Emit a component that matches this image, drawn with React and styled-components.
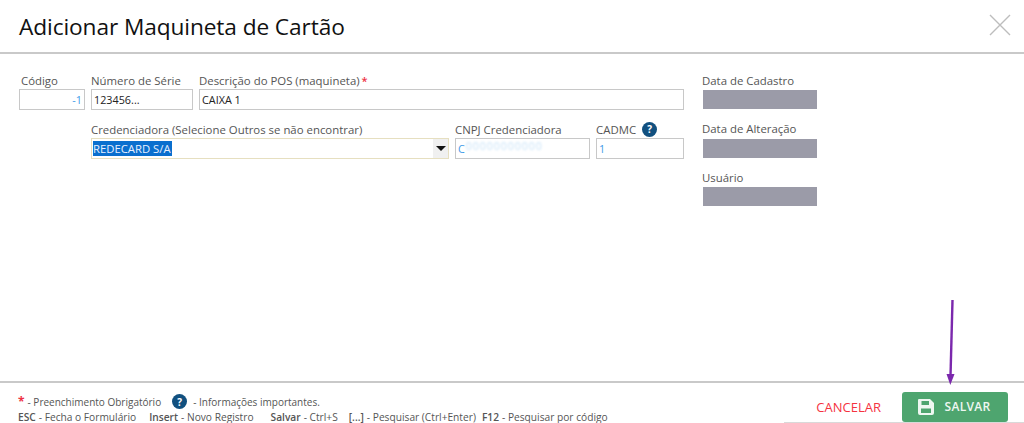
import React from 'react';
import styled, { createGlobalStyle } from 'styled-components';

const GlobalStyle = createGlobalStyle`
  html, body {
    margin: 0;
    padding: 0;
    background: #fff;
    font-family: "Open Sans", "Noto Sans", sans-serif;
  }
`;

const Page = styled.div`
  position: relative;
  width: 1024px;
  height: 423px;
  overflow: hidden;
  display: flex;
  flex-direction: column;
  background: #fff;
`;

const Header = styled.header`
  height: 52px;
  flex: none;
  display: flex;
  align-items: center;
  justify-content: space-between;
  padding: 0 13px 0 19px;
  border-bottom: 2px solid #c9c9c9;
`;

const Title = styled.h1`
  margin: 0;
  font-size: 22.7px;
  font-weight: 400;
  color: #111;
  letter-spacing: -0.1px;
`;

const CloseIcon = styled.svg`
  width: 22px;
  height: 22px;
  margin-top: -3px;
`;

const Body = styled.main`
  flex: 1;
  display: flex;
  padding: 18px 0 0 19px;
`;

const FormArea = styled.div`
  width: 665px;
  display: flex;
  flex-direction: column;
  gap: 11px;
`;

const Row = styled.div`
  display: flex;
  gap: 6px;
  padding-left: ${p => p.$indent || 0}px;
`;

const Field = styled.div`
  width: ${p => p.$w}px;
  flex: none;
`;

const Label = styled.label`
  display: flex;
  align-items: center;
  height: 16px;
  margin-bottom: 1px;
  padding-left: ${p => p.$pad ?? 0}px;
  font-size: 11.4px;
  font-weight: 400;
  color: #555;
  white-space: nowrap;
`;

const Required = styled.span`
  color: #ee3344;
  margin-left: 2px;
  font-size: 11px;
  font-weight: 600;
`;

const Input = styled.div`
  box-sizing: border-box;
  height: 21px;
  border: 1px solid #c8c8c8;
  display: flex;
  align-items: center;
  justify-content: ${p => (p.$right ? 'flex-end' : 'flex-start')};
  padding: 0 2px;
  font-size: 10.8px;
  color: ${p => (p.$blue ? '#3f9be8' : '#222')};
  white-space: nowrap;
  overflow: hidden;
`;

const SelectBox = styled(Input)`
  border-color: #e6dfc0;
  justify-content: space-between;
  padding: 0 0 0 1px;
`;

const Selected = styled.span`
  background: #0a6fce;
  color: #e8f0ff;
  font-size: 11.3px;
  line-height: 15px;
  padding-right: 1px;
`;

const Caret = styled.span`
  width: 15px;
  height: 19px;
  background: #f0f0f0;
  display: flex;
  align-items: center;
  justify-content: center;
  &::after {
    content: '';
    border-left: 5px solid transparent;
    border-right: 5px solid transparent;
    border-top: 5px solid #111;
  }
`;

const Masked = styled.span`
  margin-left: 1px;
  color: #8cc4f0;
  filter: blur(0.8px);
  opacity: 0.5;
  transform: translateY(-3px);
  font-size: 10.5px;
  letter-spacing: 1px;
`;

const HelpDot = styled.span`
  display: inline-flex;
  align-items: center;
  justify-content: center;
  width: 15px;
  height: 15px;
  border-radius: 50%;
  background: #11507f;
  color: #fff;
  font-size: 10px;
  font-weight: 700;
  margin-left: ${p => p.$gap || 0}px;
  margin-right: ${p => p.$after || 0}px;
`;

const SideColumn = styled.aside`
  margin-left: 18px;
  width: 115px;
  display: flex;
  flex-direction: column;
  gap: 11.5px;
`;

const ReadOnly = styled.div`
  height: 19px;
  margin: 2px 0 0 1px;
  background: #9b9ba8;
`;

const Footer = styled.footer`
  height: 40px;
  flex: none;
  display: flex;
  justify-content: space-between;
  border-top: 2px solid #c9c9c9;
  padding-left: 18px;
`;

const Legend = styled.div`
  padding-top: 11px;
  font-size: 10.2px;
  color: #555;
`;

const LegendLine = styled.div`
  display: flex;
  align-items: center;
  height: 15px;
  white-space: nowrap;
  font-size: ${p => p.$size || 10.2}px;
`;

const LegendMark = styled(Required)`
  margin: 0 3px 0 0;
  font-size: 12px;
  font-weight: 700;
`;

const Key = styled.b`
  font-weight: 600;
  margin-left: ${p => p.$gap || 0}px;
  margin-right: 3px;
`;

const Actions = styled.div`
  display: flex;
  align-items: center;
  padding: 8px 16px 0 32px;
  border-bottom: 1px solid #d9d9d9;
`;

const CancelButton = styled.button`
  border: 0;
  background: none;
  padding: 0;
  margin-right: 21px;
  font: 400 13px "Open Sans", sans-serif;
  color: #f5333f;
`;

const SaveButton = styled.button`
  width: 106px;
  height: 30px;
  border: 0;
  border-radius: 3px;
  background: #4ea56f;
  color: #eef7f1;
  display: flex;
  align-items: center;
  justify-content: center;
  gap: 10px;
  padding: 0 3px 0 0;
  font: 600 12px "Open Sans", sans-serif;
  letter-spacing: 0.3px;
`;

const ArrowOverlay = styled.svg`
  position: absolute;
  left: 940px;
  top: 296px;
  width: 24px;
  height: 94px;
  pointer-events: none;
`;

function App() {
  return (
    <Page>
      <GlobalStyle />
      <Header>
        <Title>Adicionar Maquineta de Cartão</Title>
        <CloseIcon viewBox="0 0 22 22">
          <path d="M1 1 L21 21 M21 1 L1 21" stroke="#bdbdbd" strokeWidth="1.4" fill="none" />
        </CloseIcon>
      </Header>

      <Body>
        <FormArea>
          <Row>
            <Field $w={66}>
              <Label $pad={2}>Código</Label>
              <Input $right $blue>-1</Input>
            </Field>
            <Field $w={102}>
              <Label>Número de Série</Label>
              <Input>123456...</Input>
            </Field>
            <Field $w={485}>
              <Label>Descrição do POS (maquineta)<Required>*</Required></Label>
              <Input>CAIXA 1</Input>
            </Field>
          </Row>
          <Row $indent={72}>
            <Field $w={358}>
              <Label>Credenciadora (Selecione Outros se não encontrar)</Label>
              <SelectBox>
                <Selected>REDECARD S/A</Selected>
                <Caret />
              </SelectBox>
            </Field>
            <Field $w={135}>
              <Label>CNPJ Credenciadora</Label>
              <Input $blue>C<Masked>00000000000</Masked></Input>
            </Field>
            <Field $w={88}>
              <Label>CADMC<HelpDot $gap={6}>?</HelpDot></Label>
              <Input $blue>1</Input>
            </Field>
          </Row>
        </FormArea>

        <SideColumn>
          <div>
            <Label>Data de Cadastro</Label>
            <ReadOnly />
          </div>
          <div>
            <Label>Data de Alteração</Label>
            <ReadOnly />
          </div>
          <div>
            <Label>Usuário</Label>
            <ReadOnly />
          </div>
        </SideColumn>
      </Body>

      <Footer>
        <Legend>
          <LegendLine $size={10}>
            <LegendMark>*</LegendMark>
            - Preenchimento Obrigatório
            <HelpDot $gap={11} $after={6}>?</HelpDot>
            - Informações importantes.
          </LegendLine>
          <LegendLine>
            <Key>ESC</Key>- Fecha o Formulário
            <Key $gap={13}>Insert</Key>- Novo Registro
            <Key $gap={17}>Salvar</Key>- Ctrl+S
            <Key $gap={11}>[...]</Key>- Pesquisar (Ctrl+Enter)
            <Key $gap={6}>F12</Key>- Pesquisar por código
          </LegendLine>
        </Legend>
        <Actions>
          <CancelButton>CANCELAR</CancelButton>
          <SaveButton>
            <svg width="18" height="18" viewBox="0 0 18 18">
              <path
                fillRule="evenodd"
                fill="#eef7f1"
                d="M2 1 H13 L17 5 V15 a2 2 0 0 1 -2 2 H3 a2 2 0 0 1 -2 -2 V2 a1 1 0 0 1 1 -1 Z M4.5 3 V7 H12 V3 Z M4 10.5 V15 H14 V10.5 Z"
              />
            </svg>
            SALVAR
          </SaveButton>
        </Actions>
      </Footer>

      <ArrowOverlay viewBox="0 0 24 94">
        <path d="M12.5 4 L10.5 80" stroke="#7b28ad" strokeWidth="2.4" fill="none" />
        <path d="M6.5 78 L14.5 78 L10.3 89 Z" fill="#7b28ad" />
      </ArrowOverlay>
    </Page>
  );
}

export default App;
